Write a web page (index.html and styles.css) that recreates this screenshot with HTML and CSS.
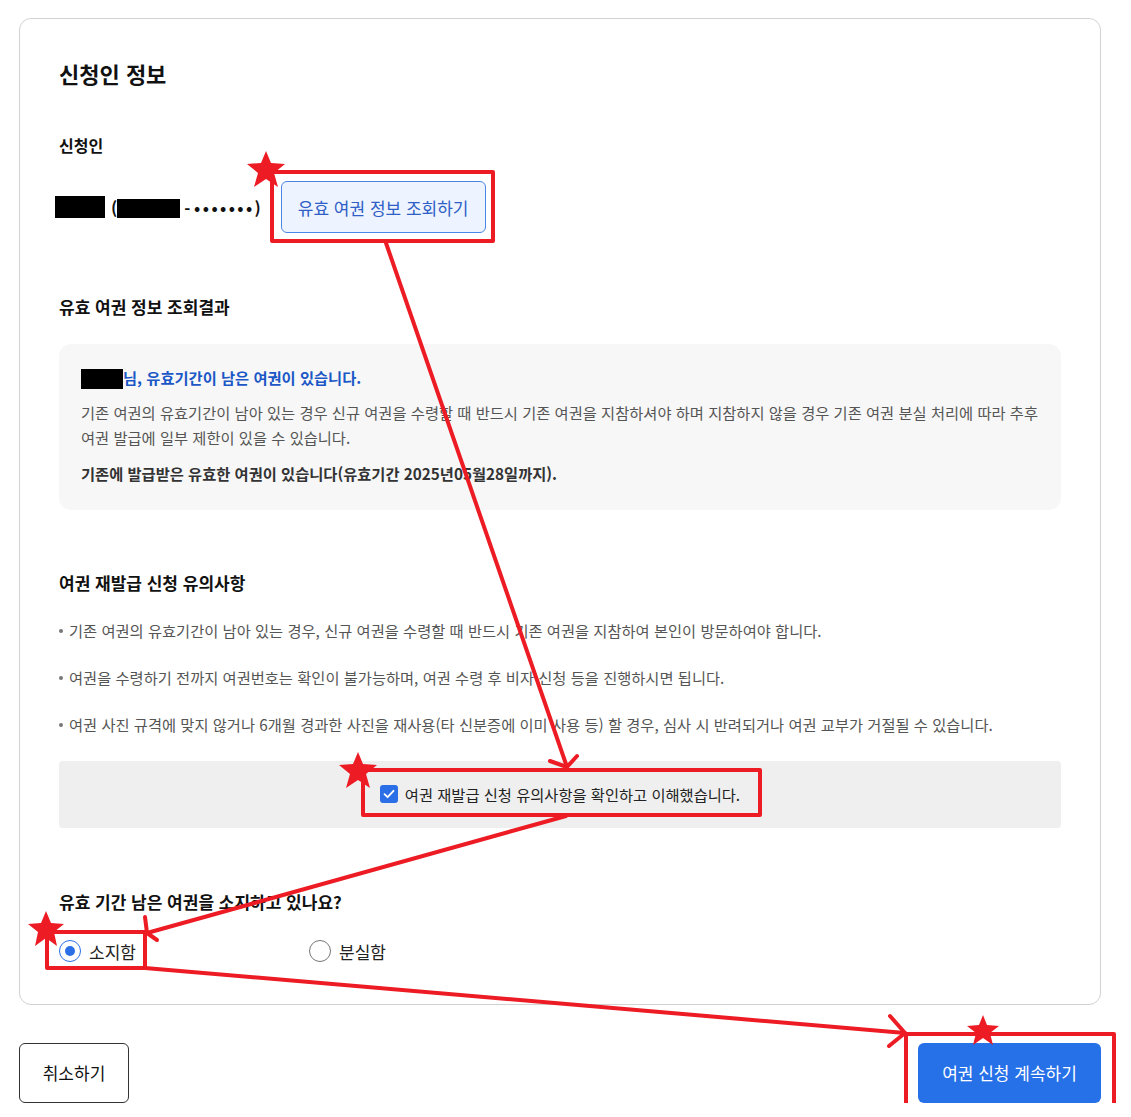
FILE: index.html
```html
<!DOCTYPE html>
<html lang="ko">
<head>
    <meta charset="UTF-8">
    <meta name="viewport" content="width=device-width, initial-scale=1.0">
    <title>신청인 정보</title>
    <link rel="stylesheet" href="styles.css">
</head>
<body>

<div class="page">
    <div class="card">
        <h2 class="card-title">신청인 정보</h2>

        <h3 class="label">신청인</h3>
        <div class="applicant-row">
            <span class="masked masked-name"></span>
            <span class="applicant-id">(<span class="masked masked-id"></span>- <span class="dots">•••••••</span>)</span>
            <button type="button" class="btn-lookup">유효 여권 정보 조회하기</button>
        </div>

        <h3 class="section-title">유효 여권 정보 조회결과</h3>
        <div class="result-box">
            <p class="result-head"><span class="masked masked-small"></span>님, 유효기간이 남은 여권이 있습니다.</p>
            <p class="result-text">기존 여권의 유효기간이 남아 있는 경우 신규 여권을 수령할 때 반드시 기존 여권을 지참하셔야 하며 지참하지 않을 경우 기존 여권 분실 처리에 따라 추후 여권 발급에 일부 제한이 있을 수 있습니다.</p>
            <p class="result-strong">기존에 발급받은 유효한 여권이 있습니다(유효기간 2025년05월28일까지).</p>
        </div>

        <h3 class="section-title">여권 재발급 신청 유의사항</h3>
        <ul class="notice-list">
            <li>기존 여권의 유효기간이 남아 있는 경우, 신규 여권을 수령할 때 반드시 기존 여권을 지참하여 본인이 방문하여야 합니다.</li>
            <li>여권을 수령하기 전까지 여권번호는 확인이 불가능하며, 여권 수령 후 비자 신청 등을 진행하시면 됩니다.</li>
            <li>여권 사진 규격에 맞지 않거나 6개월 경과한 사진을 재사용(타 신분증에 이미 사용 등) 할 경우, 심사 시 반려되거나 여권 교부가 거절될 수 있습니다.</li>
        </ul>

        <div class="agree-bar">
            <label class="agree">
                <span class="check-box">
                    <svg width="12" height="10" viewBox="0 0 12 10"><path d="M1.5 5.2 L4.6 8.2 L10.5 1.8" fill="none" stroke="#fff" stroke-width="1.8" stroke-linecap="round" stroke-linejoin="round"/></svg>
                </span>
                여권 재발급 신청 유의사항을 확인하고 이해했습니다.
            </label>
        </div>

        <h3 class="question">유효 기간 남은 여권을 소지하고 있나요?</h3>
        <div class="radio-group">
            <label class="radio"><span class="radio-dot checked"></span>소지함</label>
            <label class="radio"><span class="radio-dot"></span>분실함</label>
        </div>
    </div>

    <div class="actions">
        <button type="button" class="btn-cancel">취소하기</button>
        <button type="button" class="btn-primary">여권 신청 계속하기</button>
    </div>
</div>

<!-- hand-drawn annotations over the page -->
<svg class="marks" width="1131" height="1117" viewBox="0 0 1131 1117">
    <g fill="none" stroke="#ed1c24" stroke-width="4" stroke-linecap="round" stroke-linejoin="round">
        <rect x="272" y="172" width="221" height="69"/>
        <rect x="363" y="770" width="397" height="45"/>
        <rect x="47" y="932" width="98" height="36"/>
        <rect x="906" y="1034" width="208" height="76"/>

        <line x1="386" y1="243" x2="567" y2="767"/>
        <polyline points="550,761 567,767 577,756"/>

        <line x1="566" y1="816" x2="147" y2="933"/>
        <polyline points="145,917 147,933 157,940"/>

        <line x1="145" y1="968" x2="905" y2="1033"/>
        <polyline points="890,1016 905,1033 889,1046"/>
    </g>
    <g fill="#ed1c24">
        <polygon points="266,151 271,163 285,164 274,173 278,187 266,179 254,187 258,173 247,164 261,163"/>
        <polygon points="358,752 363,764 377,765 366,774 370,788 358,780 346,788 350,774 339,765 353,764"/>
        <polygon points="46,911 51,923 64,924 54,932 57,946 46,938 35,946 38,932 28,924 41,923"/>
        <polygon points="983,1015 987,1025 999,1026 990,1033 993,1045 983,1038 973,1045 976,1033 967,1026 979,1025"/>
    </g>
</svg>

</body>
</html>
```

FILE: styles.css
```css
* {
    box-sizing: border-box;
    margin: 0;
    padding: 0;
}

body {
    font-family: "Noto Sans CJK KR", "Noto Sans", sans-serif;
    background-color: #ffffff;
    color: #111111;
    position: relative;
}

.page {
    width: 1131px;
    padding: 18px 30px 0 19px;
}

.card {
    border: 1px solid #d2d2d2;
    border-radius: 12px;
    padding: 38px 39px 40px 39px;
}

.card-title {
    font-size: 22px;
    font-weight: 700;
    line-height: 32px;
}

.label {
    margin-top: 44px;
    font-size: 16px;
    font-weight: 700;
    line-height: 24px;
}

.applicant-row {
    margin-top: 24px;
    display: flex;
    align-items: center;
    font-size: 16.5px;
    font-weight: 700;
}

.masked {
    display: inline-block;
    background-color: #000;
    vertical-align: middle;
}

.masked-name {
    width: 50px;
    height: 22px;
    margin-left: -4px;
}

.masked-id {
    width: 63px;
    height: 19px;
    margin: 0 4px 0 0;
    position: relative;
    top: -1px;
}

.applicant-id {
    margin-left: 6px;
}

.dots {
    letter-spacing: 2.4px;
}

.btn-lookup {
    margin-left: 20px;
    height: 52px;
    padding: 0 16px;
    font-family: inherit;
    font-size: 17px;
    color: #2e5ec6;
    background-color: #edf3ff;
    border: 1px solid #4a86e8;
    border-radius: 6px;
}

.section-title {
    margin-top: 62px;
    font-size: 17px;
    font-weight: 700;
    line-height: 24px;
}

.result-box {
    margin-top: 25px;
    margin-bottom: -1px;
    background-color: #f7f7f7;
    border-radius: 12px;
    padding: 22px 22px 26px 22px;
    font-size: 15.3px;
}

.result-head {
    color: #1b57c6;
    font-weight: 700;
    line-height: 22px;
}

.masked-small {
    width: 42px;
    height: 20px;
    position: relative;
    top: -1px;
}

.result-text {
    margin-top: 10px;
    color: #555555;
    line-height: 25px;
}

.result-strong {
    margin-top: 12px;
    color: #333333;
    font-weight: 700;
    line-height: 22px;
}

.notice-list {
    list-style: none;
    margin-top: 23px;
    font-size: 15.3px;
    color: #555555;
}

.notice-list li {
    line-height: 24px;
    margin-bottom: 23px;
    padding-left: 10px;
    position: relative;
}

.notice-list li::before {
    content: "";
    position: absolute;
    left: 0;
    top: 11px;
    width: 4px;
    height: 4px;
    border-radius: 50%;
    background-color: #777;
}

.agree-bar {
    margin-top: 25px;
    height: 67px;
    background-color: #efefef;
    border-radius: 4px;
    display: flex;
    align-items: center;
    justify-content: center;
}

.agree {
    display: flex;
    align-items: center;
    font-size: 15.3px;
    color: #222;
}

.check-box {
    width: 18px;
    height: 18px;
    border-radius: 3px;
    background-color: #2b6fe6;
    display: inline-flex;
    align-items: center;
    justify-content: center;
    margin-right: 7px;
}

.question {
    margin-top: 61px;
    font-size: 17px;
    font-weight: 700;
    line-height: 26px;
}

.radio-group {
    margin-top: 24px;
    display: flex;
}

.radio {
    width: 250px;
    display: flex;
    align-items: center;
    font-size: 17px;
    color: #222;
}

.radio-dot {
    width: 22px;
    height: 22px;
    border: 1px solid #777;
    border-radius: 50%;
    margin-right: 8px;
    position: relative;
}

.radio-dot.checked {
    border-color: #2b6fe6;
}

.radio-dot.checked::after {
    content: "";
    position: absolute;
    left: 5px;
    top: 5px;
    width: 10px;
    height: 10px;
    border-radius: 50%;
    background-color: #2b6fe6;
}

.actions {
    margin-top: 38px;
    display: flex;
    justify-content: space-between;
}

.btn-cancel {
    width: 110px;
    height: 60px;
    font-family: inherit;
    font-size: 17px;
    color: #111;
    background-color: #fff;
    border: 1px solid #333;
    border-radius: 6px;
}

.btn-primary {
    width: 183px;
    height: 60px;
    font-family: inherit;
    font-size: 17px;
    color: #fff;
    background-color: #2670e8;
    border: none;
    border-radius: 6px;
}

.marks {
    position: absolute;
    left: 0;
    top: 0;
    pointer-events: none;
}
```
